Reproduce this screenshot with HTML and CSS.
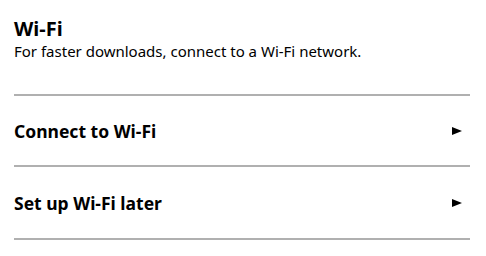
FILE: index.html
```html
<!DOCTYPE html>
<html>
<head>
  <title>Wi-Fi</title>
  <link rel="stylesheet" href="styles.css">
</head>
<body>

<div class="container">
  <header class="intro">
    <h2>Wi-Fi</h2>
    <p>For faster downloads, connect to a Wi-Fi network.</p>
  </header>

  <div class="menu">
    <div class="menu-item">
      <span>Connect to Wi-Fi</span>
      <span class="arrow"></span>
    </div>
    <div class="menu-item">
      <span>Set up Wi-Fi later</span>
      <span class="arrow"></span>
    </div>
  </div>
</div>

</body>
</html>
```

FILE: styles.css
```css
body {
  font-family: "Noto Sans", "Open Sans", sans-serif;
  margin: 0;
  padding: 0;
  background: white;
  color: #000;
}

.container {
  width: 456px;
  margin-left: 14px;
}

.intro {
  padding-top: 17px;
  height: 96px;
  box-sizing: border-box;
  border-bottom: 2px solid #b0b0b0;
}

h2 {
  margin: 0;
  font-size: 20px;
  line-height: 24px;
  font-weight: bold;
}

.intro p {
  margin: 0;
  font-size: 15px;
  line-height: 20px;
}

.menu-item {
  display: flex;
  align-items: center;
  justify-content: space-between;
  height: 71px;
  box-sizing: border-box;
  padding-right: 8px;
  border-bottom: 2px solid #b0b0b0;
  font-size: 17.5px;
  font-weight: bold;
}

.menu-item + .menu-item {
  height: 73px;
}

.arrow {
  width: 0;
  height: 0;
  border-top: 4.5px solid transparent;
  border-bottom: 4.5px solid transparent;
  border-left: 10px solid #000;
}
```
